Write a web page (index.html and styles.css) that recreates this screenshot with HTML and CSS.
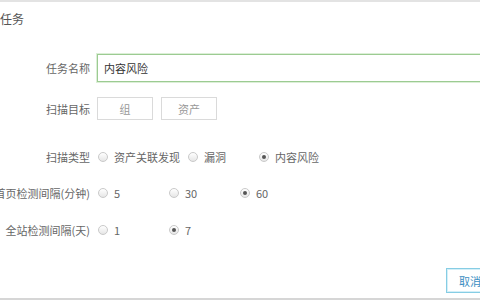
FILE: index.html
```html
<!DOCTYPE html>
<html lang="zh-CN">
<head>
    <meta charset="UTF-8">
    <title>任务</title>
    <link rel="stylesheet" href="styles.css">
</head>
<body>
    <div class="panel">
        <div class="title">任务</div>

        <div class="form">
            <div class="row row-name">
                <div class="label"><span>任务名称</span></div>
                <div class="input">内容风险</div>
            </div>

            <div class="row row-target">
                <div class="label"><span>扫描目标</span></div>
                <button class="pick">组</button>
                <button class="pick">资产</button>
            </div>

            <div class="row row-type">
                <div class="label"><span>扫描类型</span></div>
                <label class="opt"><span class="radio"></span>资产关联发现</label>
                <label class="opt"><span class="radio"></span>漏洞</label>
                <label class="opt"><span class="radio checked"></span>内容风险</label>
            </div>

            <div class="row row-home">
                <div class="label"><span>首页检测间隔(分钟)</span></div>
                <label class="opt"><span class="radio"></span>5</label>
                <label class="opt"><span class="radio"></span>30</label>
                <label class="opt"><span class="radio checked"></span>60</label>
            </div>

            <div class="row row-site">
                <div class="label"><span>全站检测间隔(天)</span></div>
                <label class="opt"><span class="radio"></span>1</label>
                <label class="opt"><span class="radio checked"></span>7</label>
            </div>
        </div>

        <div class="footer">
            <button class="cancel">取消</button>
        </div>
    </div>
</body>
</html>
```

FILE: styles.css
```css
html, body {
    margin: 0;
    height: 300px;
    overflow: hidden;
    background: #fff;
}
body {
    font-family: "Noto Sans CJK SC", "Liberation Sans", sans-serif;
    font-size: 11px;
    color: #666;
}
.panel {
    width: 520px;
    height: 296px;
    border-top: 2px solid #e3e3e3;
    border-bottom: 2px solid #d6d6d6;
    display: flex;
    flex-direction: column;
}
.title {
    padding-top: 9px;
    font-size: 12px;
    line-height: 16px;
    color: #555;
}
.form {
    margin-top: 27px;
}
.row {
    display: flex;
    align-items: center;
}
.label {
    width: 90px;
    flex: none;
    display: flex;
    justify-content: flex-end;
    margin-right: 7px;
    white-space: nowrap;
    color: #666;
}
.row-name {
    height: 28px;
}
.row-target {
    margin-top: 15px;
    height: 23px;
}
.row-type {
    margin-top: 27px;
    height: 20px;
}
.row-home {
    margin-top: 16px;
    height: 20px;
}
.row-site {
    margin-top: 17px;
    height: 20px;
}
.input {
    flex: 1;
    height: 26px;
    line-height: 26px;
    margin-right: 20px;
    padding-left: 6px;
    border: 1px solid #9ccb92;
    box-shadow: 0 0 0 1px #dcefd7;
    color: #333;
}
.pick {
    width: 56px;
    height: 23px;
    margin-right: 8px;
    padding: 0;
    border: 1px solid #dadada;
    background: #fff;
    font-family: inherit;
    font-size: 11px;
    color: #999;
}
.opt {
    display: flex;
    align-items: center;
    min-width: 64px;
    margin-right: 7px;
    white-space: nowrap;
    color: #666;
}
.radio {
    width: 8px;
    height: 8px;
    margin: 0 6px 0 1px;
    border: 1px solid #c9c9c9;
    border-radius: 50%;
    background: linear-gradient(#fff, #e6e6e6);
    display: flex;
    align-items: center;
    justify-content: center;
}
.radio.checked::after {
    content: "";
    width: 4px;
    height: 4px;
    border-radius: 50%;
    background: #555;
}
.footer {
    margin-top: 28px;
    display: flex;
    justify-content: flex-end;
    padding-right: 14px;
}
.cancel {
    width: 60px;
    height: 25px;
    padding: 0 0 0 2px;
    text-align: left;
    text-indent: 10px;
    border: 1px solid #86cde4;
    box-shadow: inset 0 0 0 1px #d4eff8;
    background: #fff;
    font-family: inherit;
    font-size: 11px;
    color: #3b8ec2;
}
```
